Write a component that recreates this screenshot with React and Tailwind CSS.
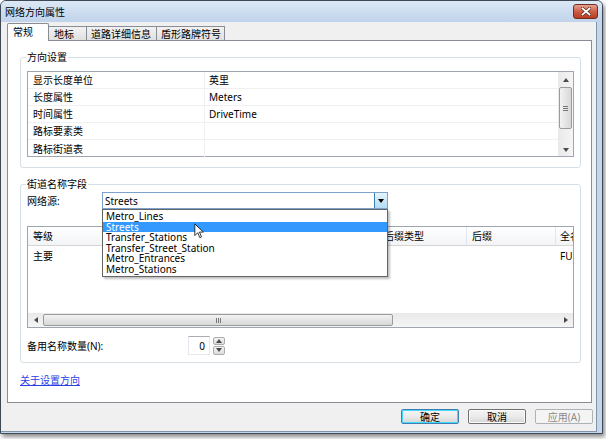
import React from 'react';

const PROPS = [
  ['显示长度单位', '英里'],
  ['长度属性', 'Meters'],
  ['时间属性', 'DriveTime'],
  ['路标要素类', ''],
  ['路标街道表', ''],
];

const SOURCES = ['Metro_Lines', 'Streets', 'Transfer_Stations', 'Transfer_Street_Station', 'Metro_Entrances', 'Metro_Stations'];

function Tri({ dir = 'down', className = '' }) {
  const pts = {
    up: '0,4 3,0 6,4',
    down: '0,0 6,0 3,4',
    left: '4,0 4,6 0,3',
    right: '0,0 0,6 4,3',
  }[dir];
  const box = dir === 'up' || dir === 'down' ? '0 0 6 4' : '0 0 4 6';
  const size = dir === 'up' || dir === 'down' ? 'w-[6px] h-[4px]' : 'w-[4px] h-[6px]';
  return (
    <svg viewBox={box} className={`${size} ${className}`}>
      <polygon points={pts} fill="#4a4a4a" />
    </svg>
  );
}

function Button({ children, primary, disabled }) {
  if (disabled) {
    return (
      <div className="w-[58px] h-[15px] flex items-center justify-center rounded-[2px] border border-[#adb2b5] bg-[#f4f4f4] text-[#8a8a8a]">
        {children}
      </div>
    );
  }
  return (
    <div
      className={`w-[58px] h-[15px] flex items-center justify-center rounded-[2px] border ${
        primary ? 'border-[#3c7fb1] shadow-[inset_0_0_0_1px_#48d8fb]' : 'border-[#707070] shadow-[inset_0_0_0_1px_#fbfbfb]'
      } bg-gradient-to-b from-[#f3f3f3] via-[#ebebeb] to-[#d5d5d5]`}
    >
      {children}
    </div>
  );
}

export default function App() {
  return (
    <div className="w-[606px] h-[439px] bg-white text-[10px] leading-[12px] text-black font-['Noto_Sans','Noto_Sans_CJK_SC',sans-serif]">
      <div className="w-[603px] h-[434px] flex flex-col border border-[#3f4956] rounded-t-[6px] bg-[#c3d6ec] shadow-[2px_3px_4px_rgba(0,0,0,0.45)] overflow-hidden">
        {/* title bar */}
        <div className="h-[21px] shrink-0 flex items-center justify-between pl-[4px] pr-[4px] bg-gradient-to-b from-[#dce8f5] to-[#bfd3eb]">
          <span>网络方向属性</span>
          <div className="w-[25px] h-[15px] flex items-center justify-center rounded-[3px] border border-[#6e3026] bg-gradient-to-b from-[#e6a290] via-[#cf5d45] to-[#b83b22]">
            <svg viewBox="0 0 10 9" className="w-[10px] h-[9px]">
              <path d="M1.5 1.5 L8.5 7.5 M8.5 1.5 L1.5 7.5" stroke="#5a2a22" strokeWidth="3.2" strokeLinecap="square" />
              <path d="M1.5 1.5 L8.5 7.5 M8.5 1.5 L1.5 7.5" stroke="#ffffff" strokeWidth="1.8" strokeLinecap="square" />
            </svg>
          </div>
        </div>

        {/* client area */}
        <div className="flex-1 min-w-0 mr-[5px] mb-[1px] flex flex-col bg-[#f0f0f0] border-r border-b border-[#8294a8] pl-[6px] pr-[4px] pt-[2px]">
          {/* tabs */}
          <div className="flex items-end h-[17px] relative z-10 -mb-[1px]">
            <div className="w-[42px] h-[18px] pl-[5px] pt-[2px] bg-white border border-b-0 border-[#898c95] rounded-t-[2px]">常规</div>
            <div className="w-[38px] h-[15px] pl-[5px] pt-[1px] bg-gradient-to-b from-[#f2f2f2] to-[#e0e0e0] border border-[#898c95] border-l-0">地标</div>
            <div className="w-[70px] h-[15px] pl-[4px] pt-[1px] bg-gradient-to-b from-[#f2f2f2] to-[#e0e0e0] border border-[#898c95] border-l-0">道路详细信息</div>
            <div className="w-[68px] h-[15px] pl-[4px] pt-[1px] bg-gradient-to-b from-[#f2f2f2] to-[#e0e0e0] border border-[#898c95] border-l-0">盾形路牌符号</div>
          </div>

          {/* tab panel */}
          <div className="h-[363px] min-w-0 border border-[#898c95] bg-white flex flex-col pl-[12px] pr-[10px]">
            {/* 方向设置 */}
            <fieldset className="min-w-0 mt-[10px] border border-[#d5dfe5] rounded-[3px] px-[6px] pt-[8px] pb-[10px]">
              <legend className="px-[1px] -ml-[1px]">方向设置</legend>
              <div className="h-[86px] flex border border-[#a0a6ad] bg-white">
                <div className="flex-1 flex flex-col">
                  {PROPS.map(([k, v]) => (
                    <div key={k} className="h-[17px] shrink-0 flex border-b border-[#f0f0f0] last:border-b-0">
                      <div className="w-[177px] pl-[5px] flex items-center border-r border-[#f0f0f0]">{k}</div>
                      <div className="flex-1 pl-[4px] flex items-center">{v}</div>
                    </div>
                  ))}
                </div>
                {/* vertical scrollbar */}
                <div className="w-[15px] flex flex-col items-center bg-gradient-to-r from-[#e9e9e9] to-[#f5f5f5]">
                  <div className="h-[15px] flex items-center justify-center"><Tri dir="up" /></div>
                  <div className="w-[13px] h-[42px] rounded-[2px] border border-[#9b9b9b] bg-gradient-to-r from-[#f2f2f2] to-[#d8d8d8] flex flex-col items-center justify-center gap-[1px]">
                    <div className="w-[5px] h-[1px] bg-[#777]" />
                    <div className="w-[5px] h-[1px] bg-[#777]" />
                    <div className="w-[5px] h-[1px] bg-[#777]" />
                  </div>
                  <div className="flex-1" />
                  <div className="h-[13px] flex items-center justify-center"><Tri dir="down" /></div>
                </div>
              </div>
            </fieldset>

            {/* 街道名称字段 */}
            <fieldset className="min-w-0 mt-[10px] border border-[#d5dfe5] rounded-[3px] px-[6px] pt-[2px] pb-[7px]">
              <legend className="px-[1px] -ml-[1px]">街道名称字段</legend>
              <div className="h-[17px] flex items-center">
                <span className="w-[75px]">网络源:</span>
                <div className="relative w-[286px] h-[17px] flex items-center border border-[#7da2ce] bg-white">
                  <span className="flex-1 pl-[2px]">Streets</span>
                  <div className="w-[13px] h-[15px] flex items-center justify-center border-l border-[#3c7fb1] bg-gradient-to-b from-[#e5f4fc] to-[#b3dcf3]">
                    <Tri dir="down" className="[&_polygon]:fill-black" />
                  </div>
                  {/* open list */}
                  <div className="absolute left-[-1px] top-[16px] z-20 w-[286px] py-[1px] border border-[#646464] bg-white shadow-[2px_2px_2px_rgba(0,0,0,0.25)]">
                    {SOURCES.map((s) => (
                      <div
                        key={s}
                        className={`h-[10.6px] leading-[10.6px] pl-[3px] ${s === 'Streets' ? 'bg-[#3399ff] text-white' : ''}`}
                      >
                        {s}
                      </div>
                    ))}
                  </div>
                  {/* mouse pointer */}
                  <svg viewBox="0 0 12 19" className="absolute left-[91px] top-[30px] z-30 w-[10px] h-[16px]">
                    <path d="M1 1 L1 15 L4.5 11.5 L7 17.5 L9 16.6 L6.6 10.8 L11.2 10.8 Z" fill="white" stroke="#111" strokeWidth="1" strokeLinejoin="round" />
                  </svg>
                </div>
              </div>

              {/* fields table */}
              <div className="mt-[17px] h-[102px] min-w-0 flex flex-col border border-[#a0a6ad] bg-white overflow-hidden">
                <div className="h-[19px] shrink-0 flex border-b border-[#d5d5d5] bg-gradient-to-b from-white to-[#f3f4f6] whitespace-nowrap">
                  <div className="w-[351px] shrink-0 pl-[5px] flex items-center border-r border-[#e2e7ed]">等级</div>
                  <div className="w-[88px] shrink-0 pl-[5px] flex items-center border-r border-[#e2e7ed]">后缀类型</div>
                  <div className="w-[89px] shrink-0 pl-[5px] flex items-center border-r border-[#e2e7ed]">后缀</div>
                  <div className="w-[60px] shrink-0 pl-[4px] flex items-center">全名</div>
                </div>
                <div className="h-[19px] shrink-0 flex whitespace-nowrap">
                  <div className="w-[351px] shrink-0 pl-[5px] flex items-center">主要</div>
                  <div className="w-[88px] shrink-0" />
                  <div className="w-[89px] shrink-0" />
                  <div className="w-[60px] shrink-0 pl-[4px] flex items-center">FULL_NAME</div>
                </div>
                <div className="flex-1" />
                {/* horizontal scrollbar */}
                <div className="h-[14px] shrink-0 flex items-center bg-gradient-to-b from-[#e9e9e9] to-[#f5f5f5]">
                  <div className="w-[15px] flex items-center justify-center"><Tri dir="left" /></div>
                  <div className="w-[350px] h-[12px] rounded-[2px] border border-[#9b9b9b] bg-gradient-to-b from-[#f2f2f2] to-[#d8d8d8] flex items-center justify-center gap-[1px]">
                    <div className="w-[1px] h-[5px] bg-[#777]" />
                    <div className="w-[1px] h-[5px] bg-[#777]" />
                    <div className="w-[1px] h-[5px] bg-[#777]" />
                  </div>
                  <div className="flex-1" />
                  <div className="w-[15px] flex items-center justify-center"><Tri dir="right" /></div>
                </div>
              </div>

              {/* spinner */}
              <div className="mt-[8px] h-[19px] flex items-center">
                <span className="w-[161px]">备用名称数量(N):</span>
                <div className="w-[22px] h-[19px] flex items-center justify-end pr-[4px] border border-[#e3e9ef] border-t-[#abadb3] bg-white">0</div>
                <div className="ml-[3px] w-[12px] h-[18px] flex flex-col gap-[1px]">
                  <div className="flex-1 flex items-center justify-center rounded-[2px] border border-[#acacac] bg-gradient-to-b from-[#f4f4f4] to-[#dcdcdc]"><Tri dir="up" className="w-[5px] h-[3px]" /></div>
                  <div className="flex-1 flex items-center justify-center rounded-[2px] border border-[#acacac] bg-gradient-to-b from-[#f4f4f4] to-[#dcdcdc]"><Tri dir="down" className="w-[5px] h-[3px]" /></div>
                </div>
              </div>
            </fieldset>

            <a className="mt-[11px] self-start text-[#2b3fe8] underline underline-offset-[1px]">关于设置方向</a>
          </div>

          {/* buttons */}
          <div className="mt-[6px] flex justify-end gap-[9px] -mr-[1px]">
            <Button primary>确定</Button>
            <Button>取消</Button>
            <Button disabled>应用(A)</Button>
          </div>
        </div>
      </div>
    </div>
  );
}
